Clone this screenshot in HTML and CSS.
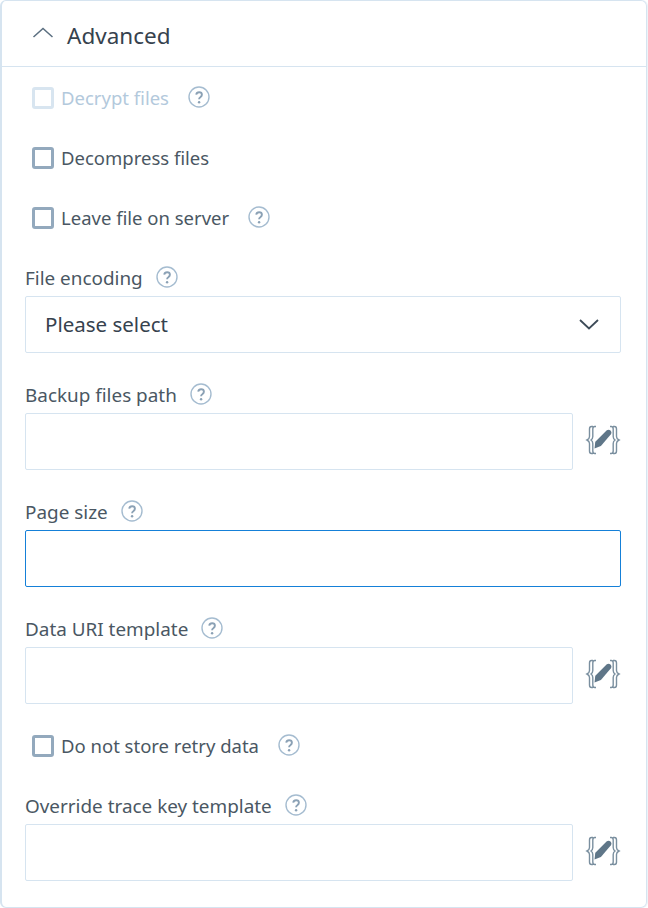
FILE: index.html
```
<!DOCTYPE html>
<html lang="en">
<head>
<meta charset="utf-8">
<title>Advanced</title>
<link rel="stylesheet" href="styles.css">
</head>
<body>
<svg class="defs" width="0" height="0" aria-hidden="true">
  <symbol id="help" viewBox="0 0 22 22">
    <circle cx="11" cy="11" r="10" fill="none" stroke="#a5bcd0" stroke-width="1.4"/>
    <path d="M8.200 8.600c.3-1.500 1.400-2.300 2.900-2.300 1.600 0 2.800 1 2.800 2.400 0 1.300-.8 1.900-1.600 2.500-.8.5-1.200 1-1.200 2" fill="none" stroke="#8ba1b5" stroke-width="1.900"/>
    <circle cx="11.100" cy="16.200" r="1.200" fill="#8ba1b5"/>
  </symbol>
  <symbol id="expr" viewBox="0 0 38 30">
    <path d="M9 1.500H7.500C6 1.500 5.500 2.500 5.500 4v7.500c0 1.500-.8 2.700-2.500 3.500 1.700.8 2.500 2 2.500 3.500V26c0 1.500.5 2.500 2 2.500H9M12 1.500h-1.300C9.300 1.500 8.800 2.500 8.800 4v7.500c0 1.500-.6 2.700-1.800 3.500 1.200.8 1.800 2 1.800 3.500V26c0 1.500.5 2.500 1.900 2.500H12M29 1.500h1.500C32 1.500 32.500 2.500 32.500 4v7.500c0 1.500.8 2.700 2.500 3.500-1.700.8-2.500 2-2.500 3.500V26c0 1.500-.5 2.500-2 2.500H29M26 1.500h1.300c1.400 0 1.900 1 1.900 2.500v7.500c0 1.500.6 2.700 1.800 3.500-1.200.8-1.800 2-1.800 3.500V26c0 1.500-.5 2.500-1.900 2.500H26" fill="none" stroke="#7a8f9f" stroke-width="1.400"/>
    <path d="M22.800 5.300c1.100-.9 2.600-.9 3.700.2 1.100 1.100 1.300 2.600.4 3.700l-10 11.900-6.400 2.400.8-6.700z" fill="#5f7688"/>
  </symbol>
</svg>
<main class="card">
  <header class="card-head">
    <svg class="chev-up" width="22" height="12" viewBox="0 0 22 12"><path d="M1.500 10 11 1.500l9.500 8.500" fill="none" stroke="#5b6f80" stroke-width="1.500"/></svg>
    <h2 class="card-title">Advanced</h2>
  </header>
  <div class="card-body">
    <label class="check disabled"><span class="box"></span><span class="check-text">Decrypt files</span><svg class="help" width="22" height="22"><use href="#help"/></svg></label>
    <label class="check"><span class="box"></span><span class="check-text">Decompress files</span></label>
    <label class="check"><span class="box"></span><span class="check-text">Leave file on server</span><svg class="help" width="22" height="22"><use href="#help"/></svg></label>

    <div class="field after-check">
      <div class="label"><span class="label-text">File encoding</span><svg class="help" width="22" height="22"><use href="#help"/></svg></div>
      <div class="select"><span class="select-text">Please select</span>
        <svg width="20" height="11" viewBox="0 0 20 11"><path d="M1 1l9 8.500L19 1" fill="none" stroke="#3d4b58" stroke-width="1.800"/></svg>
      </div>
    </div>

    <div class="field">
      <div class="label"><span class="label-text">Backup files path</span><svg class="help" width="22" height="22"><use href="#help"/></svg></div>
      <div class="input-row"><div class="input"></div><svg class="expr" width="38" height="30"><use href="#expr"/></svg></div>
    </div>

    <div class="field">
      <div class="label"><span class="label-text">Page size</span><svg class="help" width="22" height="22"><use href="#help"/></svg></div>
      <div class="input focus"></div>
    </div>

    <div class="field">
      <div class="label"><span class="label-text">Data URI template</span><svg class="help" width="22" height="22"><use href="#help"/></svg></div>
      <div class="input-row"><div class="input"></div><svg class="expr" width="38" height="30"><use href="#expr"/></svg></div>
    </div>

    <label class="check after-field"><span class="box"></span><span class="check-text">Do not store retry data</span><svg class="help" width="22" height="22"><use href="#help"/></svg></label>

    <div class="field after-check">
      <div class="label"><span class="label-text">Override trace key template</span><svg class="help" width="22" height="22"><use href="#help"/></svg></div>
      <div class="input-row"><div class="input"></div><svg class="expr" width="38" height="30"><use href="#expr"/></svg></div>
    </div>
  </div>
</main>
</body>
</html>
```
FILE: styles.css
```
* { box-sizing: border-box; }
html, body { margin: 0; height: 100%; background: #fff; }
body { font-family: "Noto Sans", "Open Sans", sans-serif; color: #4a5763; overflow: hidden; }
.defs { position: absolute; }
.card { width: 647px; height: 908px; border: 1px solid #d6e4f0; border-left-width: 2px; border-radius: 6px; box-shadow: 1px 0 0 #eef3f7; }
.card-head { height: 66px; display: flex; align-items: center; padding: 5px 0 0 30px; border-bottom: 1px solid #d6e4f0; }
.chev-up { margin-top: -6px; }
.card-title { margin: -1px 0 0 13px; font-size: 22.5px; font-weight: 400; color: #36424e; line-height: 30px; }
.card-body { padding: 1px 25px 0 23px; }
.check { display: flex; align-items: center; height: 60px; padding-left: 7px; font-size: 18.5px; }
.check-text { margin-bottom: 2px; }
.check .box { width: 22px; height: 22px; border: 3px solid #93a9bd; border-radius: 3px; background: #fff; margin-right: 7px; flex: none; }
.check .help { margin-left: 19px; margin-bottom: 2px; }
.check.disabled { color: #b3c9dc; }
.check.disabled .box { border-color: #d8e5f0; }
.label { display: flex; align-items: center; height: 28px; margin-bottom: 5px; font-size: 18.9px; }
.label-text { margin-top: 2px; }
.label .help { margin-left: 13px; }
.field { margin-top: 27px; }
.field.after-check { margin-top: 15px; }
.select, .input { height: 57px; border: 1px solid #d6e4f0; border-radius: 2px; background: #fff; }
.select { display: flex; align-items: center; justify-content: space-between; padding: 0 21px 0 19px; font-size: 20.5px; color: #36424e; }
.select-text { margin-bottom: 2px; }
.input { flex: 1; }
.input.focus { border-color: #1580d8; }
.input-row { display: flex; align-items: center; }
.expr { margin: -4px -1px 0 11px; flex: none; }
.check.after-field { margin-top: 12px; }
```
